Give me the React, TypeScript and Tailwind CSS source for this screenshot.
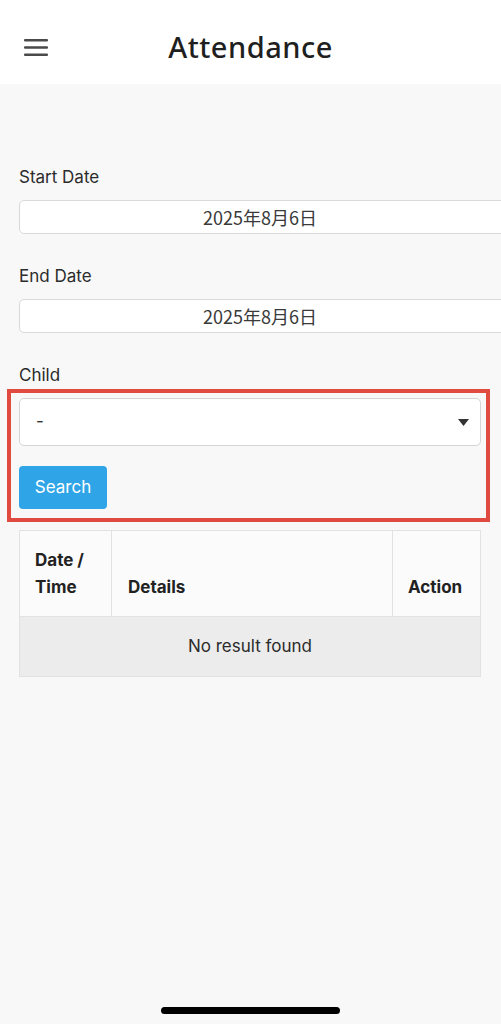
const font = { fontFamily: "Inter, 'Noto Sans', 'Noto Sans CJK JP', sans-serif" };

function DateField({ label, value }: { label: string; value: string }) {
    return (
        <div className="flex flex-col">
            <label className="text-[17px] leading-[20px] text-[#2b2b2b]">{label}</label>
            <div className="mt-[13px] w-[500px] h-[34px] flex items-center justify-center bg-white border border-[#d9d9d9] rounded-[5px] text-[18px] text-[#3a3a3a]" style={{ fontFamily: "'Noto Sans CJK JP', sans-serif" }}>
                <span className="-ml-[18px]">{value}</span>
            </div>
        </div>
    );
}

function Hamburger() {
    return (
        <svg className="absolute left-[24px] top-[39px]" width="24" height="18" viewBox="0 0 24 18">
            <rect x="0" y="0" width="24" height="2.6" rx="1" fill="#4a4a4a" />
            <rect x="0" y="7.2" width="24" height="2.6" rx="1" fill="#4a4a4a" />
            <rect x="0" y="14.4" width="24" height="2.6" rx="1" fill="#4a4a4a" />
        </svg>
    );
}

export default function App() {
    return (
        <div className="relative h-[1024px] w-[501px] overflow-hidden flex flex-col bg-[#f8f8f8]" style={font}>
            <header className="h-[84px] bg-white flex items-center relative">
                <Hamburger />
                <h1 className="w-full text-center text-[29px] font-medium text-[#1f1f1f] tracking-[0.5px] pt-[10px]" style={{ fontFamily: "'Noto Sans', sans-serif" }}>
                    Attendance
                </h1>
            </header>

            <main className="flex-1 relative px-[19px] pt-[83px]">
                <DateField label="Start Date" value="2025年8月6日" />
                <div className="mt-[32px]">
                    <DateField label="End Date" value="2025年8月6日" />
                </div>

                <label className="block mt-[32px] text-[17px] leading-[20px] text-[#2b2b2b]">Child</label>
                <div className="mt-[13px] w-[462px] h-[48px] bg-white border border-[#d5d5d5] rounded-[5px] flex items-center justify-between pl-[16px] pr-[11px]">
                    <span className="text-[17px] text-[#333]">-</span>
                    <svg width="11" height="7" viewBox="0 0 11 7">
                        <path d="M0 0 L11 0 L5.5 7 Z" fill="#333" />
                    </svg>
                </div>

                <button className="mt-[20px] w-[88px] h-[43px] rounded-[4px] bg-[#2fa4e7] text-white text-[17px]">
                    Search
                </button>

                <table className="mt-[21px] w-[462px] border-collapse text-[17px] text-[#222]">
                    <thead>
                        <tr className="bg-[#fbfbfb]">
                            <th className="w-[92px] h-[86px] border border-[#e2e2e2] align-bottom text-left font-bold leading-[27px] pl-[15px] pr-[8px] pb-[15px]">Date / Time</th>
                            <th className="border border-[#e2e2e2] align-bottom text-left font-bold leading-[27px] pl-[16px] pb-[15px]">Details</th>
                            <th className="w-[88px] border border-[#e2e2e2] align-bottom text-left font-bold leading-[27px] pl-[15px] pb-[15px]">Action</th>
                        </tr>
                    </thead>
                    <tbody>
                        <tr className="bg-[#ececec]">
                            <td colSpan={3} className="h-[60px] border border-[#e2e2e2] text-center text-[17px] text-[#2b2b2b]">No result found</td>
                        </tr>
                    </tbody>
                </table>

                {/* annotation box */}
                <div className="absolute left-[7px] top-[305px] w-[483px] h-[133px] border-[4px] border-[#e04a3f] pointer-events-none" />
            </main>

            <div className="absolute left-[161px] top-[1007px] w-[179px] h-[7px] rounded-full bg-black" />
        </div>
    );
}
